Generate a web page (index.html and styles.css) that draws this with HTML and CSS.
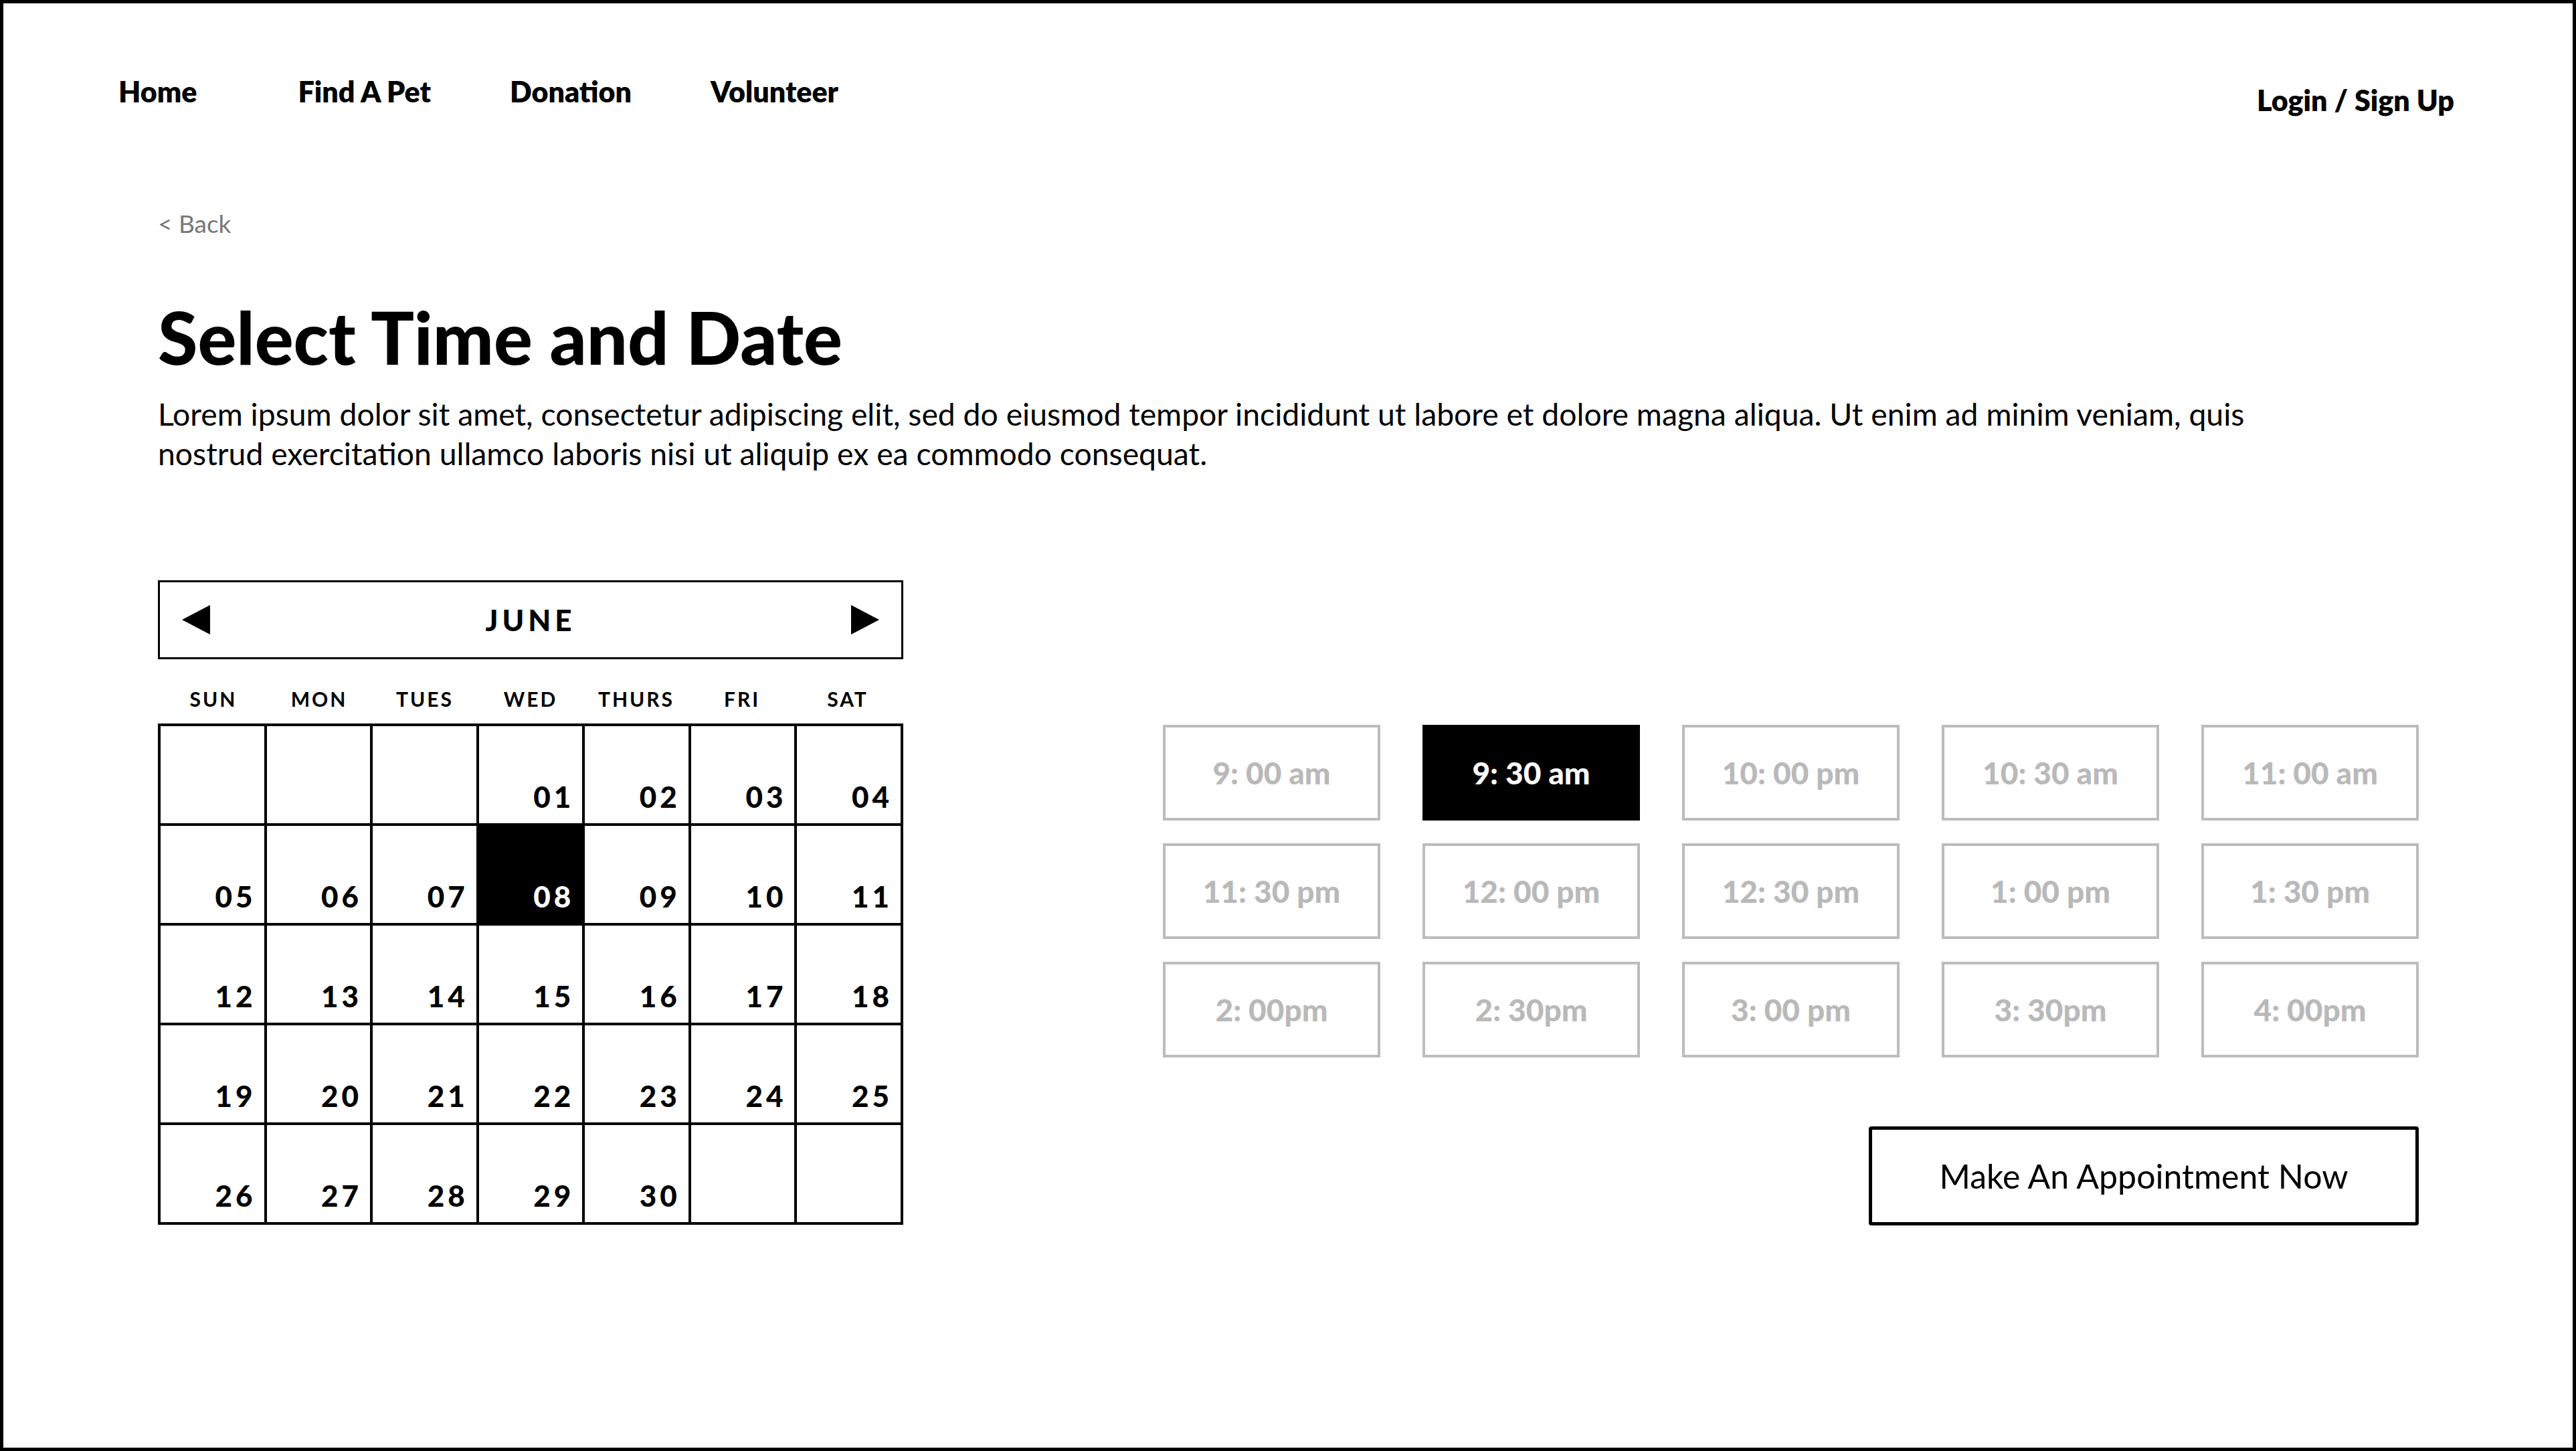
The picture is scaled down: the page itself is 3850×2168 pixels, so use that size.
FILE: index.html
```html
<!DOCTYPE html>
<html lang="en">
<head>
<meta charset="utf-8">
<title>Select Time and Date</title>
<link rel="stylesheet" href="styles.css">
</head>
<body>
<div class="frame">
  <header class="topbar">
    <nav class="nav">
      <a class="nav-link nav-home" href="#">Home</a>
      <a class="nav-link" href="#">Find A Pet</a>
      <a class="nav-link" href="#">Donation</a>
      <a class="nav-link" href="#">Volunteer</a>
    </nav>
    <a class="login" href="#">Login / Sign Up</a>
  </header>

  <main class="content">
    <a class="back" href="#">&lt; Back</a>
    <h1 class="title">Select Time and Date</h1>
    <p class="intro">Lorem ipsum dolor sit amet, consectetur adipiscing elit, sed do eiusmod tempor incididunt ut labore et dolore magna aliqua. Ut enim ad minim veniam, quis nostrud exercitation ullamco laboris nisi ut aliquip ex ea commodo consequat.</p>

    <section class="booking">
      <div class="calendar">
        <div class="cal-head">
          <svg class="arrow" viewBox="0 0 42 44" width="42" height="44"><polygon points="42,0 42,44 0,22" fill="#000"/></svg>
          <span class="month">JUNE</span>
          <svg class="arrow" viewBox="0 0 42 44" width="42" height="44"><polygon points="0,0 42,22 0,44" fill="#000"/></svg>
        </div>
        <div class="weekdays">
          <span>SUN</span><span>MON</span><span>TUES</span><span>WED</span><span>THURS</span><span>FRI</span><span>SAT</span>
        </div>
        <div class="days">
          <div class="day"></div><div class="day"></div><div class="day"></div>
          <div class="day"><span>01</span></div><div class="day"><span>02</span></div><div class="day"><span>03</span></div><div class="day"><span>04</span></div>
          <div class="day"><span>05</span></div><div class="day"><span>06</span></div><div class="day"><span>07</span></div><div class="day day-selected"><span>08</span></div><div class="day"><span>09</span></div><div class="day"><span>10</span></div><div class="day"><span>11</span></div>
          <div class="day"><span>12</span></div><div class="day"><span>13</span></div><div class="day"><span>14</span></div><div class="day"><span>15</span></div><div class="day"><span>16</span></div><div class="day"><span>17</span></div><div class="day"><span>18</span></div>
          <div class="day"><span>19</span></div><div class="day"><span>20</span></div><div class="day"><span>21</span></div><div class="day"><span>22</span></div><div class="day"><span>23</span></div><div class="day"><span>24</span></div><div class="day"><span>25</span></div>
          <div class="day"><span>26</span></div><div class="day"><span>27</span></div><div class="day"><span>28</span></div><div class="day"><span>29</span></div><div class="day"><span>30</span></div><div class="day"></div><div class="day"></div>
        </div>
      </div>

      <div class="times">
        <div class="slots">
          <div class="slot">9: 00 am</div>
          <div class="slot slot-selected">9: 30 am</div>
          <div class="slot">10: 00 pm</div>
          <div class="slot">10: 30 am</div>
          <div class="slot">11: 00 am</div>
          <div class="slot">11: 30 pm</div>
          <div class="slot">12: 00 pm</div>
          <div class="slot">12: 30 pm</div>
          <div class="slot">1: 00 pm</div>
          <div class="slot">1: 30 pm</div>
          <div class="slot">2: 00pm</div>
          <div class="slot">2: 30pm</div>
          <div class="slot">3: 00 pm</div>
          <div class="slot">3: 30pm</div>
          <div class="slot">4: 00pm</div>
        </div>
        <a class="cta" href="#">Make An Appointment Now</a>
      </div>
    </section>
  </main>
</div>
</body>
</html>
```

FILE: styles.css
```css
* { box-sizing: border-box; }

html, body {
  margin: 0;
  padding: 0;
  background: #fff;
}

body {
  font-family: "Lato", "Noto Sans", sans-serif;
  color: #000;
}

a { color: inherit; text-decoration: none; }

.frame {
  width: 3850px;
  height: 2168px;
  border: 5px solid #000;
  overflow: hidden;
}

/* top bar */
.topbar {
  display: flex;
  justify-content: space-between;
  align-items: flex-start;
  height: 157px;
  padding: 107px 177px 0 172px;
}

.nav {
  display: flex;
  gap: 118px;
}

.nav-link,
.login {
  font-size: 43px;
  line-height: 50px;
  font-weight: 800;
  color: #000;
}

.nav-home { margin-right: 33px; }

.login { margin-top: 13px; }

/* content */
.content {
  padding-left: 231px;
}

.back {
  display: block;
  margin-top: 152px;
  font-size: 37px;
  line-height: 40px;
  color: #777;
}

.title {
  margin: 95px 0 0;
  font-size: 108px;
  line-height: 108px;
  font-weight: 900;
}

.intro {
  margin: 32px 0 0;
  max-width: 3200px;
  font-size: 46.3px;
  line-height: 59px;
  font-weight: 400;
}

.booking {
  display: flex;
  margin-top: 160px;
}

/* calendar */
.calendar {
  width: 1114px;
  flex: none;
}

.cal-head {
  height: 118px;
  border: 3px solid #000;
  display: flex;
  align-items: center;
  justify-content: space-between;
  padding: 0 33px;
}

.arrow { display: block; }

.month {
  font-size: 44px;
  font-weight: 900;
  letter-spacing: 6px;
}

.weekdays {
  display: grid;
  grid-template-columns: repeat(7, 1fr);
  height: 96px;
  align-items: end;
  padding: 0 4px 19px;
  text-align: center;
  font-size: 30px;
  line-height: 36px;
  font-weight: 700;
  letter-spacing: 3px;
}

.days {
  display: grid;
  grid-template-columns: repeat(7, 1fr);
  grid-auto-rows: 145px;
  gap: 4px;
  padding: 4px;
  background: #000;
}

.day {
  background: #fff;
  display: flex;
  align-items: flex-end;
  justify-content: flex-end;
  padding: 0 12px 18px 0;
  font-size: 44px;
  line-height: 1;
  font-weight: 900;
  letter-spacing: 5px;
}

.day-selected {
  background: #000;
  color: #fff;
}

/* time slots */
.times {
  margin-left: 388px;
  padding-top: 216px;
  width: 1877px;
  display: flex;
  flex-direction: column;
}

.slots {
  display: grid;
  grid-template-columns: repeat(5, 325px);
  grid-auto-rows: 143px;
  column-gap: 63px;
  row-gap: 34px;
}

.slot {
  border: 4px solid #bcbcbc;
  display: flex;
  align-items: center;
  justify-content: center;
  font-size: 46px;
  font-weight: 900;
  color: #b9b9b9;
}

.slot-selected {
  background: #000;
  border-color: #000;
  color: #fff;
}

.cta {
  align-self: flex-end;
  margin-top: 103px;
  width: 822px;
  height: 148px;
  border: 5px solid #000;
  border-radius: 4px;
  display: flex;
  align-items: center;
  justify-content: center;
  font-size: 50px;
  font-weight: 400;
  color: #000;
}
```
